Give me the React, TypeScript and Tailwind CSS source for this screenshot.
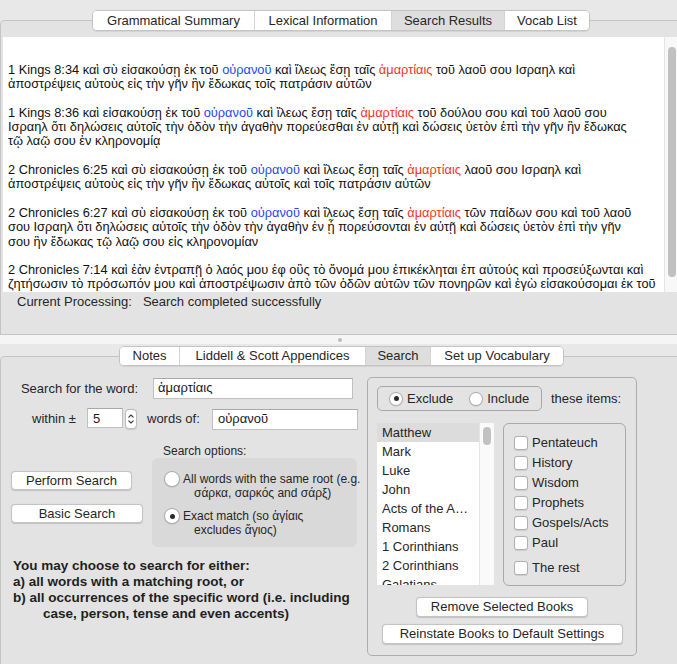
import React from 'react';
import clsx from 'clsx';

type Seg = { t: string; c?: 'b' | 'r' };
const N = (t: string): Seg => ({ t });
const B = (t: string): Seg => ({ t, c: 'b' });
const R = (t: string): Seg => ({ t, c: 'r' });

// search results, one array per verse, one inner array per wrapped line
const results: Seg[][][] = [
  [
    [N('1 Kings 8:34 καὶ σὺ εἰσακούσῃ ἐκ τοῦ '), B('οὐρανοῦ'), N(' καὶ ἵλεως ἔσῃ ταῖς '), R('ἁμαρτίαις'), N(' τοῦ λαοῦ σου Ισραηλ καὶ')],
    [N('ἀποστρέψεις αὐτοὺς εἰς τὴν γῆν ἣν ἔδωκας τοῖς πατράσιν αὐτῶν')],
  ],
  [
    [N('1 Kings 8:36 καὶ εἰσακούσῃ ἐκ τοῦ '), B('οὐρανοῦ'), N(' καὶ ἵλεως ἔσῃ ταῖς '), R('ἁμαρτίαις'), N(' τοῦ δούλου σου καὶ τοῦ λαοῦ σου')],
    [N('Ισραηλ ὅτι δηλώσεις αὐτοῖς τὴν ὁδὸν τὴν ἀγαθὴν πορεύεσθαι ἐν αὐτῇ καὶ δώσεις ὑετὸν ἐπὶ τὴν γῆν ἣν ἔδωκας')],
    [N('τῷ λαῷ σου ἐν κληρονομίᾳ')],
  ],
  [
    [N('2 Chronicles 6:25 καὶ σὺ εἰσακούσῃ ἐκ τοῦ '), B('οὐρανοῦ'), N(' καὶ ἵλεως ἔσῃ ταῖς '), R('ἁμαρτίαις'), N(' λαοῦ σου Ισραηλ καὶ')],
    [N('ἀποστρέψεις αὐτοὺς εἰς τὴν γῆν ἣν ἔδωκας αὐτοῖς καὶ τοῖς πατράσιν αὐτῶν')],
  ],
  [
    [N('2 Chronicles 6:27 καὶ σὺ εἰσακούσῃ ἐκ τοῦ '), B('οὐρανοῦ'), N(' καὶ ἵλεως ἔσῃ ταῖς '), R('ἁμαρτίαις'), N(' τῶν παίδων σου καὶ τοῦ λαοῦ')],
    [N('σου Ισραηλ ὅτι δηλώσεις αὐτοῖς τὴν ὁδὸν τὴν ἀγαθὴν ἐν ᾗ πορεύσονται ἐν αὐτῇ καὶ δώσεις ὑετὸν ἐπὶ τὴν γῆν')],
    [N('σου ἣν ἔδωκας τῷ λαῷ σου εἰς κληρονομίαν')],
  ],
  [
    [N('2 Chronicles 7:14 καὶ ἐὰν ἐντραπῇ ὁ λαός μου ἐφ οὓς τὸ ὄνομά μου ἐπικέκληται ἐπ αὐτούς καὶ προσεύξωνται καὶ')],
    [N('ζητήσωσιν τὸ πρόσωπόν μου καὶ ἀποστρέψωσιν ἀπὸ τῶν ὁδῶν αὐτῶν τῶν πονηρῶν καὶ ἐγὼ εἰσακούσομαι ἐκ τοῦ')],
    [B('οὐρανοῦ'), N(' καὶ ἵλεως ἔσομαι ταῖς '), R('ἁμαρτίαις'), N(' αὐτῶν καὶ ἰάσομαι τὴν γῆν αὐτῶν')],
  ],
];

const topTabs = [
  { label: 'Grammatical Summary', w: 'w-[161px]' },
  { label: 'Lexical Information', w: 'w-[137px]' },
  { label: 'Search Results', w: 'w-[113px]' },
  { label: 'Vocab List', w: 'w-[85px]' },
];

const bottomTabs = [
  { label: 'Notes', w: 'w-[59px]' },
  { label: 'Liddell & Scott Appendices', w: 'w-[186px]' },
  { label: 'Search', w: 'w-[65px]' },
  { label: 'Set up Vocabulary', w: 'w-[133px]' },
];

const books = ['Matthew', 'Mark', 'Luke', 'John', 'Acts of the A…', 'Romans', '1 Corinthians', '2 Corinthians', 'Galatians'];
const groups = ['Pentateuch', 'History', 'Wisdom', 'Prophets', 'Gospels/Acts', 'Paul'];

function TabStrip({ tabs, active, className }: { tabs: { label: string; w: string }[]; active: string; className?: string }) {
  return (
    <div
      className={clsx(
        'relative z-10 flex w-fit overflow-hidden rounded-[5px] border border-[#c3c3c3] bg-white shadow-[0_1px_1px_rgba(0,0,0,0.07)]',
        className
      )}
    >
      {tabs.map((t, i) => (
        <div
          key={t.label}
          className={clsx(
            'flex h-full items-center justify-center text-[13px] text-[#262626]',
            t.w,
            i > 0 && 'border-l border-[#d5d5d5]',
            t.label === active ? 'bg-[#dedede]' : 'bg-white'
          )}
        >
          {t.label}
        </div>
      ))}
    </div>
  );
}

function Radio({ on, big }: { on?: boolean; big?: boolean }) {
  return (
    <span
      className={clsx(
        'flex shrink-0 items-center justify-center rounded-full border border-[#adadad] bg-white shadow-[0_0.5px_1px_rgba(0,0,0,0.15)]',
        big ? 'h-[16px] w-[16px]' : 'h-[14px] w-[14px]'
      )}
    >
      {on && <span className="h-[5px] w-[5px] rounded-full bg-[#2b2b2b]" />}
    </span>
  );
}

function Checkbox() {
  return <span className="h-[14px] w-[14px] shrink-0 rounded-[3px] border border-[#b0b0b0] bg-white shadow-[0_0.5px_1px_rgba(0,0,0,0.1)]" />;
}

function Button({ label, className }: { label: string; className?: string }) {
  return (
    <div
      className={clsx(
        'flex items-center justify-center rounded-[4px] border border-[#c4c4c4] bg-white text-[13px] text-[#262626] shadow-[0_0.5px_1px_rgba(0,0,0,0.15)]',
        className
      )}
    >
      {label}
    </div>
  );
}

function Field({ value, className }: { value: string; className?: string }) {
  return (
    <div
      className={clsx(
        'flex items-center border border-[#c0c0c0] border-t-[#a9a9a9] bg-white text-[13px] leading-none text-[#1a1a1a]',
        className
      )}
    >
      {value}
    </div>
  );
}

export default function App() {
  return (
    <div className="h-[664px] w-[677px] overflow-hidden bg-[#e8e8e8] font-['Liberation_Sans',Arial,sans-serif] text-[#262626]">
      {/* Top pane */}
      <div className="flex h-[335px] flex-col">
        <div className="pt-[10px]">
          <TabStrip tabs={topTabs} active="Search Results" className="ml-[92px] h-[21px]" />
        </div>
        <div className="-mt-[11px] flex flex-1 flex-col rounded-tl-[5px] border border-r-0 border-[#c4c4c4] bg-[#e3e3e3] pl-[2px] pt-[16px]">
          <div className="flex h-[255px] bg-white">
            <div className="flex-1 overflow-hidden pl-[5px] pt-[26px] text-[12.8px] text-[#111]">
              {results.map((entry, ei) => (
                <div key={ei} className={clsx(ei > 0 && 'mt-[14.3px]')}>
                  {entry.map((line, li) => (
                    <div key={li} className="h-[14.3px] whitespace-nowrap leading-[14.3px]">
                      {line.map((s, si) => (
                        <span
                          key={si}
                          className={clsx(s.c === 'b' && 'text-[#2447f2]', s.c === 'r' && 'text-[#f3331f]')}
                        >
                          {s.t}
                        </span>
                      ))}
                    </div>
                  ))}
                </div>
              ))}
            </div>
            <div className="w-[13px] border-l border-[#e4e4e4] bg-[#f8f8f8] pl-[3px] pt-[10px]">
              <div className="h-[230px] w-[8px] rounded-full bg-[#c1c1c1]" />
            </div>
          </div>
          {/* Status */}
          <div className="flex-1 pl-[14px] pt-[2px] text-[13px] leading-[16px] text-[#262626]">
            <span>Current Processing:</span>
            <span className="ml-[11px]">Search completed successfully</span>
          </div>
        </div>
      </div>

      {/* Split view divider */}
      <div className="flex h-[9px] items-center bg-[#f5f5f5] pl-[338px]">
        <div className="h-[4px] w-[4px] rounded-full bg-[#bcbcbc]" />
      </div>

      {/* Bottom pane */}
      <div className="pt-[2px]">
        <TabStrip tabs={bottomTabs} active="Search" className="ml-[119px] h-[20px]" />
        <div className="-mt-[10px] flex h-[308px] rounded-tl-[5px] border border-b-0 border-r-0 border-[#c4c4c4] bg-[#e3e3e3]">
          {/* Left: search form */}
          <div className="w-[366px]">
            <div className="mt-[21px] flex h-[21px] items-center">
              <span className="w-[137px] text-right text-[13px]">Search for the word:</span>
              <Field value="ἁμαρτίαις" className="ml-[15px] h-[21px] w-[200px] pb-[2px] pl-[4px]" />
            </div>

            <div className="mt-[9px] flex h-[22px] items-start">
              <span className="w-[86px] pl-[31px] text-[13px] leading-[22px]">within ±</span>
              <Field value="5" className="h-[20px] w-[36px] pl-[5px]" />
              <div className="ml-[2px] mt-[1px] h-[20px] w-[12px] rounded-[4px] border border-[#bdbdbd] bg-white shadow-[0_0.5px_1px_rgba(0,0,0,0.12)]">
                <svg width="10" height="18" viewBox="0 0 10 18" fill="none" stroke="#3a3a3a" strokeWidth="1.1" strokeLinecap="round" strokeLinejoin="round">
                  <path d="M2.8 7.2 5 5 7.2 7.2" />
                  <path d="M2.8 10.8 5 13 7.2 10.8" />
                </svg>
              </div>
              <span className="ml-[10px] w-[64px] text-[13px] leading-[22px]">words of:</span>
              <Field value="οὐρανοῦ" className="ml-[1px] mt-[1px] h-[21px] w-[146px] pb-[3px] pl-[5px]" />
            </div>

            <div className="mt-[15px] flex items-start">
              <div className="pl-[10px] pt-[26px]">
                <Button label="Perform Search" className="h-[19px] w-[121px]" />
                <Button label="Basic Search" className="mt-[14px] h-[19px] w-[132px]" />
              </div>
              <div className="ml-[9px]">
                <div className="h-[13px] pl-[11px] text-[12px] leading-[13px]">Search options:</div>
                <div className="h-[89px] w-[205px] rounded-[6px] bg-[#d9d9d9] pl-[12px] pt-[13px] text-[12px] leading-[14px]">
                  <div className="flex items-start">
                    <Radio big />
                    <div className="ml-[3px] mt-[1px]">
                      <div className="whitespace-nowrap">All words with the same root (e.g.</div>
                      <div className="pl-[11px]">σάρκα, σαρκός and σάρξ)</div>
                    </div>
                  </div>
                  <div className="mt-[8px] flex items-start">
                    <Radio big on />
                    <div className="ml-[3px] mt-[1px]">
                      <div>Exact match (so ἁγίαις</div>
                      <div className="pl-[11px]">excludes ἅγιος)</div>
                    </div>
                  </div>
                </div>
              </div>
            </div>

            <div className="mt-[11px] pl-[12px] text-[13.5px] font-bold leading-[16px] text-[#1f1f1f]">
              <div>You may choose to search for either:</div>
              <div>a) all words with a matching root, or</div>
              <div>b) all occurrences of the specific word (i.e. including</div>
              <div className="pl-[30px]">case, person, tense and even accents)</div>
            </div>
          </div>

          {/* Right: book filter */}
          <div className="mt-[20px] flex h-[279px] w-[270px] flex-col rounded-[5px] border border-[#adadad]">
            <div className="ml-[9px] mt-[8px] flex items-center">
              <div className="flex h-[25px] w-[165px] items-center rounded-[5px] border border-[#a8a8a8] pl-[11px] text-[13px]">
                <Radio on />
                <span className="ml-[4px]">Exclude</span>
                <span className="ml-[16px]">
                  <Radio />
                </span>
                <span className="ml-[4px]">Include</span>
              </div>
              <span className="ml-[9px] text-[13px]">these items:</span>
            </div>

            <div className="ml-[9px] mt-[12px] flex items-start">
              <div className="flex h-[162px] w-[117px] bg-white">
                <div className="flex-1 overflow-hidden text-[13px]">
                  {books.map((b, i) => (
                    <div
                      key={b}
                      className={clsx('h-[19px] whitespace-nowrap pl-[5px] leading-[20px]', i === 0 && 'bg-[#dcdcdc]')}
                    >
                      {b}
                    </div>
                  ))}
                </div>
                <div className="w-[15px] border-l border-[#e6e6e6] bg-[#fafafa] pl-[3px] pt-[4px]">
                  <div className="h-[18px] w-[8px] rounded-full bg-[#c1c1c1]" />
                </div>
              </div>
              <div className="ml-[9px] h-[163px] w-[123px] rounded-[6px] border border-[#a9a9a9] pl-[10px] pt-[9px] text-[13px]">
                {groups.map((g) => (
                  <div key={g} className="flex h-[20px] items-center">
                    <Checkbox />
                    <span className="ml-[4px]">{g}</span>
                  </div>
                ))}
                <div className="mt-[5px] flex h-[20px] items-center">
                  <Checkbox />
                  <span className="ml-[4px]">The rest</span>
                </div>
              </div>
            </div>

            <Button label="Remove Selected Books" className="mt-[11px] h-[20px] w-[172px] self-center" />
            <Button label="Reinstate Books to Default Settings" className="mt-[7px] h-[20px] w-[241px] self-center" />
          </div>
        </div>
      </div>
    </div>
  );
}
